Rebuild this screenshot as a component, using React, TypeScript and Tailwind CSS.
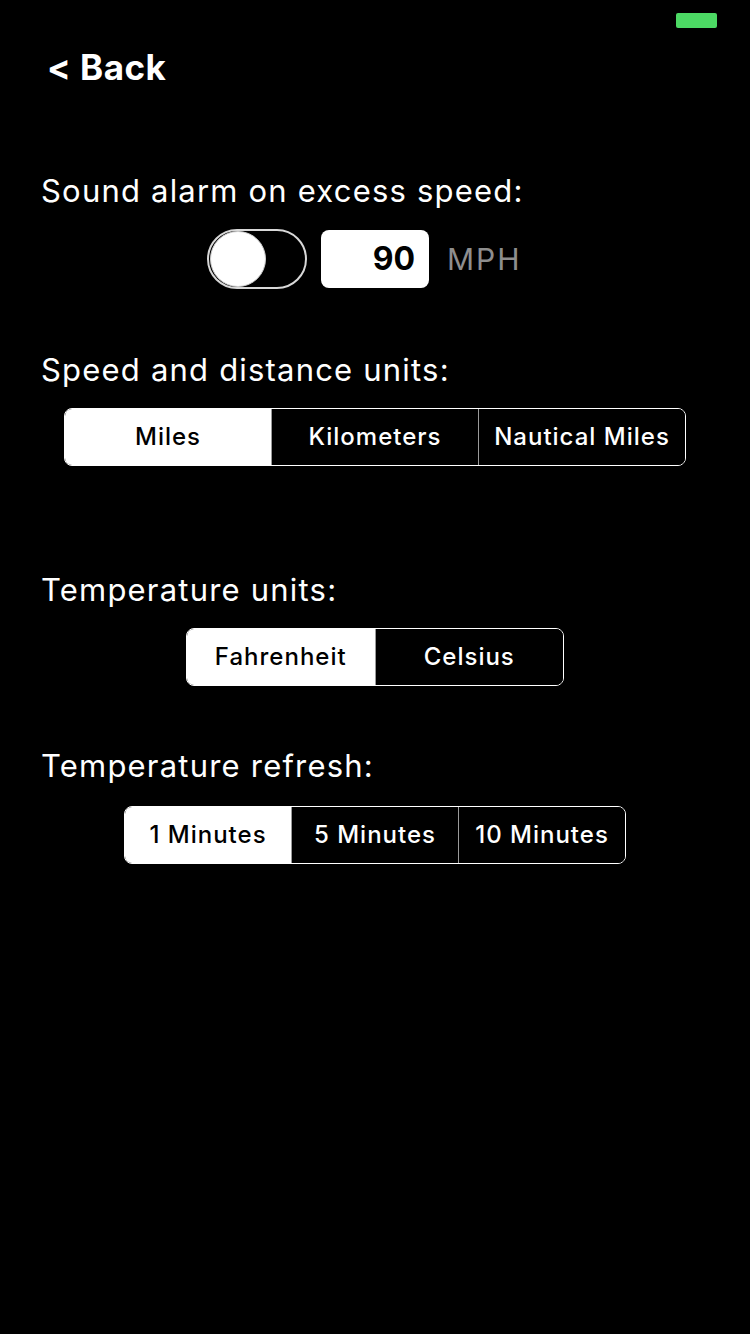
import React from "react";

function Segmented({ items, selected, width }: { items: string[]; selected: number; width: string }) {
  return (
    <div className={`flex h-[58px] mx-auto rounded-[8px] border-[1.5px] border-white overflow-hidden ${width}`}>
      {items.map((it, i) => (
        <div
          key={it}
          className={`flex-1 flex items-center justify-center text-[24px] tracking-[1px] font-medium ${
            i === selected ? "bg-white text-black" : "bg-black text-white"
          } ${i > 0 ? "border-l-[1.5px] border-[#9a9a9a]" : ""}`}
        >
          {it}
        </div>
      ))}
    </div>
  );
}

export default function App() {
  return (
    <div className="min-h-[1334px] w-[750px] bg-black text-white" style={{ fontFamily: "Inter, 'Noto Sans', sans-serif" }}>
      <div className="flex justify-end pr-[33px] pt-[13px]">
        <div className="w-[41px] h-[15px] bg-[#4cd964] rounded-[2px]" />
      </div>
      <div className="pl-[47px] mt-[19px] text-[35px] leading-[40px] tracking-[0.5px] font-bold">&lt; Back</div>

      <div className="pl-[41px] mt-[86px] text-[31px] leading-[36px] tracking-[1.2px]">Sound alarm on excess speed:</div>
      <div className="flex items-center pl-[207px] mt-[20px] h-[60px]">
        <div className="w-[100px] h-[60px] rounded-full border-2 border-[#d8d8d8] bg-black flex items-center p-[1px]">
          <div className="w-[56px] h-[56px] rounded-full bg-white border border-[#cfcfcf]" />
        </div>
        <div className="ml-[14px] w-[108px] h-[58px] bg-white rounded-[8px] flex items-center justify-end pr-[14px] text-black text-[32px] font-bold">
          90
        </div>
        <div className="ml-[18px] text-[30px] tracking-[2px] text-[#8e8e8e]">MPH</div>
      </div>

      <div className="pl-[41px] mt-[63px] text-[31px] leading-[36px] tracking-[1.2px]">Speed and distance units:</div>
      <div className="mt-[20px]">
        <Segmented items={["Miles", "Kilometers", "Nautical Miles"]} selected={0} width="w-[622px]" />
      </div>

      <div className="pl-[41px] mt-[106px] text-[31px] leading-[36px] tracking-[1.2px]">Temperature units:</div>
      <div className="mt-[20px]">
        <Segmented items={["Fahrenheit", "Celsius"]} selected={0} width="w-[378px]" />
      </div>

      <div className="pl-[41px] mt-[62px] text-[31px] leading-[36px] tracking-[1.2px]">Temperature refresh:</div>
      <div className="mt-[22px]">
        <Segmented items={["1 Minutes", "5 Minutes", "10 Minutes"]} selected={0} width="w-[502px]" />
      </div>
    </div>
  );
}
